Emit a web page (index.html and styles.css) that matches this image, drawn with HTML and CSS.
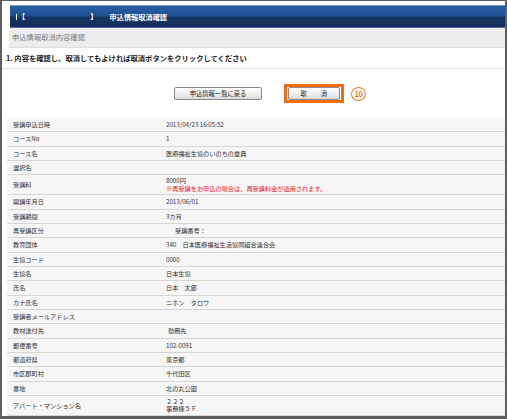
FILE: index.html
```html
<!DOCTYPE html>
<html lang="ja">
<head>
<meta charset="utf-8">
<title>申込情報取消確認</title>
<link rel="stylesheet" href="styles.css">
</head>
<body>
<div class="frame">
  <div class="titlebar">
    <span class="tbar"></span>
    <span class="bracket">【</span><span class="blank"></span><span class="bracket">】</span>
    <span class="title">申込情報取消確認</span>
  </div>
  <div class="subhead">申込情報取消内容確認</div>
  <div class="instr">1. 内容を確認し、取消してもよければ取消ボタンをクリックしてください</div>
  <div class="actions">
    <button class="btn back">申込情報一覧に戻る</button>
    <span class="hl"><button class="btn cancel">取　　消</button></span>
    <span class="num">10</span>
  </div>
  <div class="rows">
    <div class="row"><div class="lbl">受講申込日時</div><div class="val">2013/04/23 16:05:52</div></div>
    <div class="row"><div class="lbl">コースNo</div><div class="val">1</div></div>
    <div class="row"><div class="lbl">コース名</div><div class="val">医療福祉生協のいのちの章典</div></div>
    <div class="row"><div class="lbl">選択名</div><div class="val"></div></div>
    <div class="row double"><div class="lbl">受講料</div><div class="val">8000円<br><span class="red">※再受講をお申込の場合は、再受講料金が適用されます。</span></div></div>
    <div class="row"><div class="lbl">開講年月日</div><div class="val">2013/06/01</div></div>
    <div class="row"><div class="lbl">受講期間</div><div class="val">3カ月</div></div>
    <div class="row"><div class="lbl">再受講区分</div><div class="val indent">受講番号：</div></div>
    <div class="row"><div class="lbl">教育団体</div><div class="val">340　日本医療福祉生活協同組合連合会</div></div>
    <div class="row"><div class="lbl">生協コード</div><div class="val">0000</div></div>
    <div class="row"><div class="lbl">生協名</div><div class="val">日本生協</div></div>
    <div class="row"><div class="lbl">氏名</div><div class="val">日本　太郎</div></div>
    <div class="row"><div class="lbl">カナ氏名</div><div class="val">ニホン　タロウ</div></div>
    <div class="row"><div class="lbl">受講者メールアドレス</div><div class="val"></div></div>
    <div class="row"><div class="lbl">教材送付先</div><div class="val small-indent">勤務先</div></div>
    <div class="row"><div class="lbl">郵便番号</div><div class="val">102-0091</div></div>
    <div class="row"><div class="lbl">都道府県</div><div class="val">東京都</div></div>
    <div class="row"><div class="lbl">市区郡町村</div><div class="val">千代田区</div></div>
    <div class="row"><div class="lbl">番地</div><div class="val">北の丸公園</div></div>
    <div class="row double"><div class="lbl">アパート・マンション名</div><div class="val">２２２<br>事務棟５Ｆ</div></div>
  </div>
</div>
</body>
</html>
```

FILE: styles.css
```css
* { box-sizing: border-box; }
html, body { margin: 0; padding: 0; background: #fff; }
body { font-family: "Noto Sans CJK JP", "Noto Sans", sans-serif; color: #333; }

.frame {
  width: 507px;
  height: 419px;
  border-style: solid;
  border-color: #5e5e5e;
  border-width: 1px 2px 3px 2px;
  overflow: hidden;
  background: #fff;
}

.titlebar {
  margin: 4px 0 0 8px;
  height: 23px;
  border-top: 1px solid #7c9cc8;
  border-bottom: 1px solid #4e70a4;
  background: linear-gradient(#2a5ea4 0%, #1e4f92 45%, #173563 55%, #152d58 100%);
  display: flex;
  align-items: center;
  color: #fff;
  font-size: 7.2px;
  font-weight: 700;
  padding-left: 5.5px;
}
.tbar { width: 1.6px; height: 6px; background: #fff; margin-right: 1px; }
.bracket { line-height: 1; }
.blank { width: 65px; }
.title { margin-left: 12px; }

.subhead {
  margin-left: 7px;
  height: 20px;
  background: #ececec;
  border-bottom: 1px solid #dcdcdc;
  color: #7a7a7a;
  font-size: 7.3px;
  line-height: 19px;
  padding-left: 3px;
}

.instr {
  height: 21px;
  border-bottom: 1px solid #e4e4e4;
  padding-left: 4px;
  font-size: 7.3px;
  font-weight: 700;
  color: #222;
  line-height: 20px;
}

.actions {
  height: 49px;
  display: flex;
  align-items: center;
  padding-left: 172px;
}
.btn {
  font-family: inherit;
  font-size: 6.3px;
  color: #222;
  height: 13px;
  padding: 0;
  border: 1px solid #8a8a8a;
  border-radius: 2px;
  background: linear-gradient(#ffffff 0%, #f1f1f1 50%, #dadada 100%);
  line-height: 11px;
}
.back { width: 88px; }
.hl {
  display: flex;
  margin-left: 22px;
  border: 3px solid #f26c14;
  padding: 0 1px;
  background: #fff;
}
.cancel { width: 52px; letter-spacing: 0.5px; }
.num {
  margin-left: 7px;
  width: 15px;
  height: 14px;
  border: 1.6px solid #f07812;
  border-radius: 50%;
  color: #f07812;
  font-size: 7.5px;
  font-weight: 700;
  display: flex;
  align-items: center;
  justify-content: center;
  letter-spacing: -0.4px;
}

.rows { margin-left: 5px; }
.row {
  display: grid;
  grid-template-columns: 155px 1fr;
  height: 14.33px;
  border-bottom: 1px solid #d6d6d6;
  background: #f6f6f6;
  font-size: 6.2px;
  line-height: 13.33px;
}
.row.double { height: 20px; }
.lbl { padding-left: 6px; align-self: center; }
.val { padding-left: 4px; align-self: center; }
.double .val { line-height: 7.5px; }
.indent { padding-left: 13px; }
.small-indent { padding-left: 6px; }
.red { color: #e8202a; }
```
